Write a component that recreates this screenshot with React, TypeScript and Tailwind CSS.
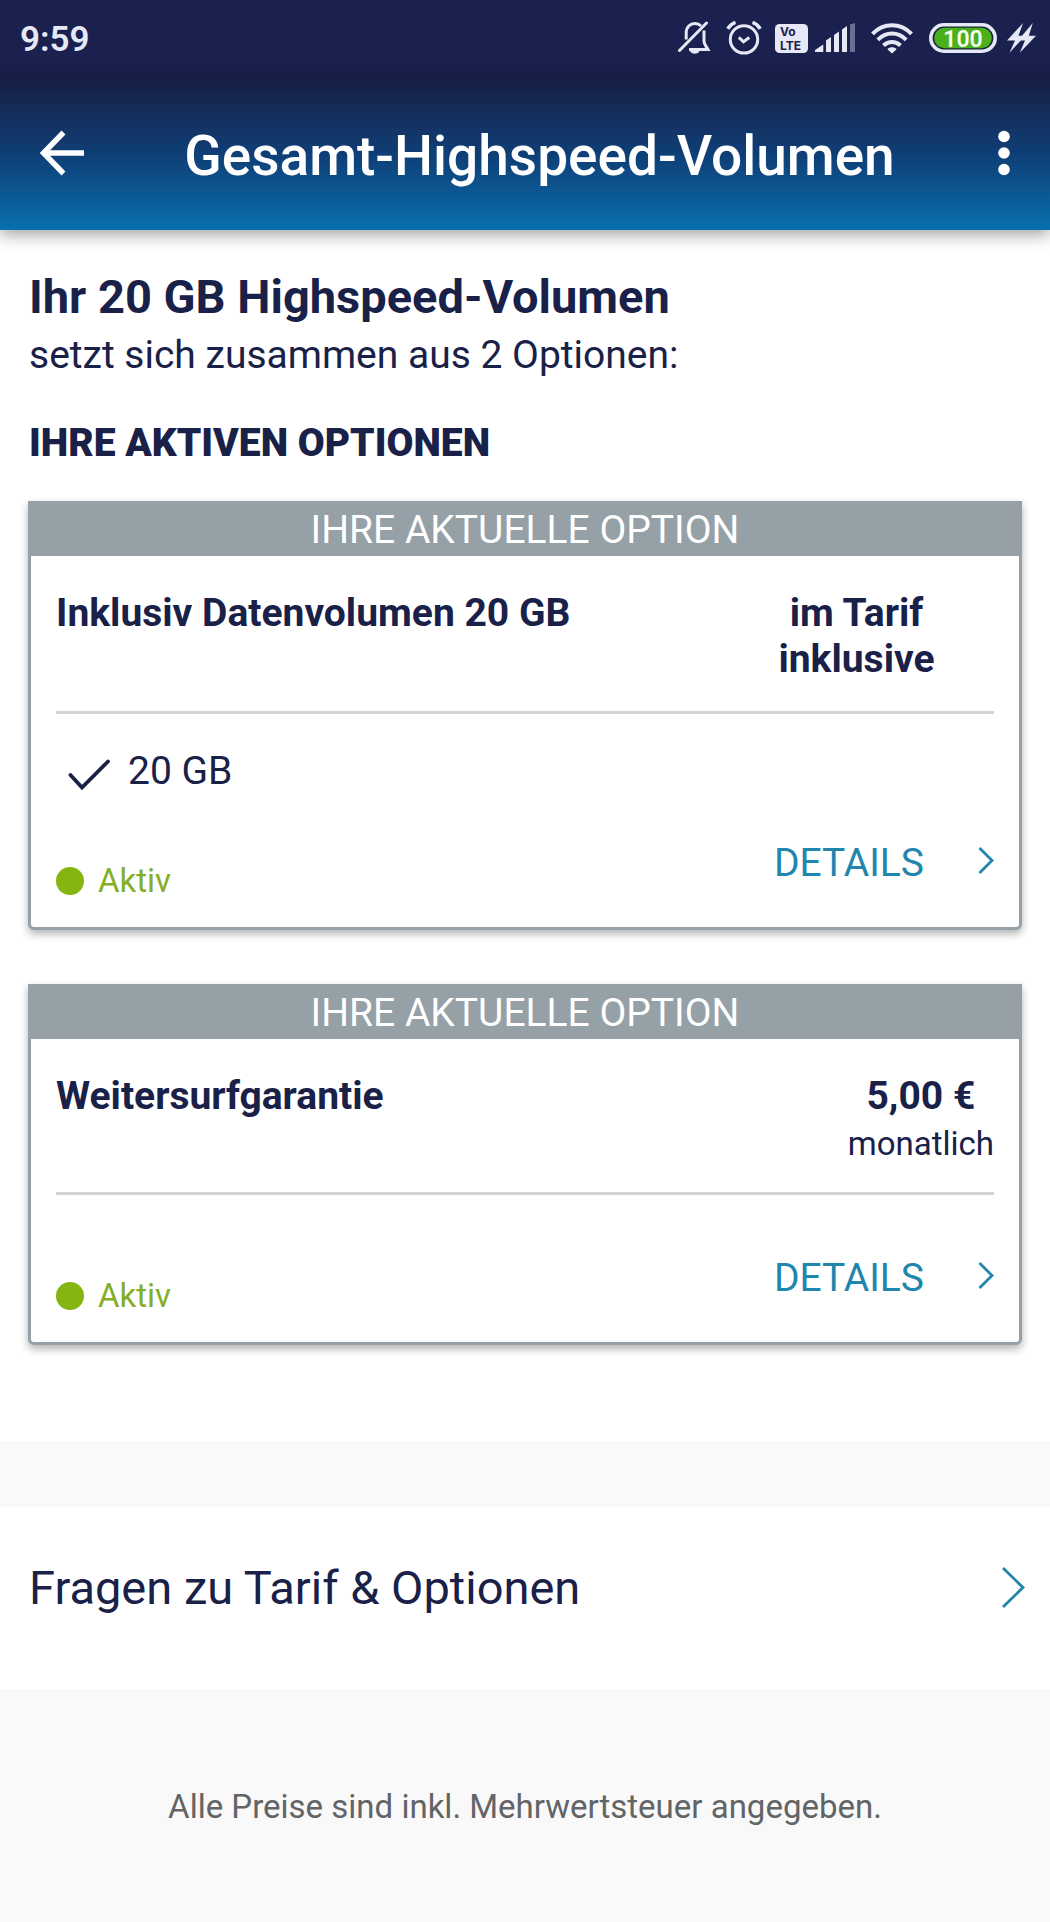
import React from "react";

type Option = {
  name: string;
  price: string;
  interval?: string;
  features: string[];
};

const options: Option[] = [
  { name: "Inklusiv Datenvolumen 20 GB", price: "im Tarif inklusive", features: ["20 GB"] },
  { name: "Weitersurfgarantie", price: "5,00 €", interval: "monatlich", features: [] },
];

function StatusBar() {
  return (
    <div className="flex h-[76px] items-center bg-[#1a214e] pl-5 pr-[14px] text-[#e6e8f6]">
      <span className="flex-1 pt-1 text-[35px] font-semibold">9:59</span>

      {/* muted bell */}
      <svg className="mr-[15px] h-9 w-[33px]" viewBox="0 0 33 36" fill="none" stroke="currentColor" strokeWidth="3">
        <path d="M8.2 19.5V13C8.2 7 12 3.6 17 3.6c2.6 0 4.4.8 6 2.4M26 10.5V21c0 3.500 2 5 4 8.600H11" />
        <path d="M1.5 30.5 28.5 3" strokeLinecap="round" />
        <path d="M12 31h9.500c-1.200 3.600-8.300 3.600-9.500 0z" fill="currentColor" stroke="none" />
      </svg>

      {/* alarm */}
      <svg className="mr-[13px] h-9 w-9" viewBox="0 0 36 36" fill="none" stroke="currentColor" strokeWidth="3">
        <circle cx="18" cy="19.4" r="13.7" />
        <path d="M12.8 17.3l4.700 4.500 5.800-4.300" />
        <path d="M1.800 8.800C3.500 5.800 6 3.600 9.500 2.400M34.200 8.800c-1.700-3-4.200-5.200-7.700-6.400" strokeWidth="3.4" />
      </svg>

      {/* VoLTE */}
      <svg className="mr-[7px] h-9 w-[33px]" viewBox="0 0 33 36">
        <rect x="0" y="4" width="33" height="29" rx="4.5" fill="currentColor" />
        <text x="5" y="16" fontFamily="Inter, sans-serif" fontSize="12" fontWeight="700" fill="#1a214e">Vo</text>
        <text x="5" y="30" fontFamily="Inter, sans-serif" fontSize="12" fontWeight="700" fill="#1a214e">LTE</text>
      </svg>

      {/* signal */}
      <svg className="mr-4 h-9 w-10" viewBox="0 0 40 36" fill="currentColor">
        <path d="M0 32v-2l8.300-5.500V32zM11 32V20.500l5-3.500v15zM19 32V15l5-3.500V32zM27 32V9.500L32 6v26z" />
        <path d="M35 32V4.500L40 3v29z" opacity=".4" />
      </svg>

      {/* wifi */}
      <svg className="mr-4 h-9 w-[42px]" viewBox="0 0 42 36" fill="none" stroke="currentColor" strokeWidth="4">
        <path d="M1.500 13.800C12.500 2.300 29.500 2.300 40.500 13.800" />
        <path d="M6.800 19.800C15 11.500 27 11.500 35.200 19.800" />
        <path d="M12.500 25.500c5-4.800 12-4.800 17 0" />
        <path d="M16.300 29.300c2.800-2.600 6.600-2.600 9.400 0L21 33.500z" fill="currentColor" stroke="none" />
      </svg>

      {/* battery */}
      <svg className="mr-[10px] h-9 w-[68px]" viewBox="0 0 68 36">
        <rect x="1.8" y="4.8" width="64.4" height="26.4" rx="13.2" fill="#15263a" stroke="currentColor" strokeWidth="3.6" />
        <rect x="5.2" y="7.8" width="57.6" height="20.4" rx="10.2" fill="#4caf1d" />
        <text x="34" y="26.5" textAnchor="middle" fontFamily="Roboto, sans-serif" fontSize="23" fontWeight="600" fill="#f4fff0">100</text>
      </svg>

      {/* charging */}
      <svg className="h-9 w-[29px]" viewBox="0 0 29 36" fill="currentColor">
        <path d="M16 3 0 20.500h8L2.500 32.800 18 15.800h-6.500z" />
        <path d="M25.800 3 11 20.500h7L12.800 32.800 29 15.800h-7.200z" />
      </svg>
    </div>
  );
}

function Header() {
  return (
    <header className="relative flex h-[154px] items-center bg-linear-to-b from-[#151e42] via-[#0e3e76] to-[#0670ad] pl-[38px] pr-[37px] text-white shadow-[0_4px_16px_rgba(0,0,0,0.4)]">
      <button aria-label="Zurück">
        <svg className="h-[46px] w-[46px]" viewBox="0 0 46 46" fill="none" stroke="currentColor" strokeWidth="5.4">
          <path d="M46 23H6M25.500 2.500 5.500 23l20 20.500" />
        </svg>
      </button>
      <h1 className="flex-1 pt-[6px] text-center text-[55px] font-medium">Gesamt-Highspeed-Volumen</h1>
      <button aria-label="Menü">
        <svg className="h-[46px] w-[18px]" viewBox="0 0 18 46" fill="currentColor">
          <circle cx="9" cy="6.5" r="5.8" />
          <circle cx="9" cy="23" r="5.8" />
          <circle cx="9" cy="39.5" r="5.8" />
        </svg>
      </button>
    </header>
  );
}

function OptionCard({ option }: { option: Option }) {
  const hasFeatures = option.features.length > 0;
  return (
    <article className="rounded-b-md border-[3px] border-[#95a0a7] bg-white shadow-[0_4px_8px_rgba(0,0,0,0.3)]">
      <div className="bg-[#95a0a7] text-center leading-[52px] text-white">IHRE AKTUELLE OPTION</div>
      <div className="px-[25px] pb-[23px] pt-[34px]">
        <div className="flex justify-between border-b-[3px] border-[#d0d4d5] pb-[29px] font-bold">
          <h3>{option.name}</h3>
          {option.interval ? (
            <div className="text-center">
              <p>{option.price}</p>
              <p className="pt-1.5 text-[33px] font-normal leading-[38px]">{option.interval}</p>
            </div>
          ) : (
            <p className="w-[275px] text-center">{option.price}</p>
          )}
        </div>
        <ul className={hasFeatures ? "pt-[34px]" : "pt-[14px]"}>
          {option.features.map((feature) => (
            <li key={feature} className="flex items-center gap-[18px] pl-3">
              <svg className="h-[42px] w-[42px]" viewBox="0 0 42 42" fill="none" stroke="currentColor" strokeWidth="3.8" strokeLinecap="round">
                <path d="M2.500 25 14 37.500 40 11.500" />
              </svg>
              {feature}
            </li>
          ))}
        </ul>
        <div className="mt-[46px] flex items-end justify-between">
          <div className="flex items-center gap-[14px] text-[33px] text-[#84ae27]">
            <span className="h-7 w-7 rounded-full bg-[#84b510]" />
            Aktiv
          </div>
          <button className="mb-[18px] flex items-center gap-[54px] text-[#2186ae]">
            DETAILS
            <svg className="h-8 w-4" viewBox="0 0 16 32" fill="none" stroke="currentColor" strokeWidth="2.8">
              <path d="M1.500 1 14 13.500 1.500 26" />
            </svg>
          </button>
        </div>
      </div>
    </article>
  );
}

export default function App() {
  return (
    <div className="min-h-screen bg-[#f9f9f9] font-['Roboto',sans-serif] text-[39px] leading-[46px] text-[#1a2148]">
      <StatusBar />
      <Header />
      <main>
        <section className="bg-white px-7 pb-24 pt-[37px]">
          <div className="pl-px">
            <p className="text-[47px] font-bold leading-[60px]">Ihr 20 GB Highspeed-Volumen</p>
            <p className="leading-[56px]">setzt sich zusammen aus 2 Optionen:</p>
            <h2 className="mb-[30px] mt-8 font-black leading-[56px]">IHRE AKTIVEN OPTIONEN</h2>
          </div>
          <div className="flex flex-col gap-[54px]">
            {options.map((option) => (
              <OptionCard key={option.name} option={option} />
            ))}
          </div>
        </section>
        <a
          href="#fragen"
          className="mt-[66px] flex items-center justify-between bg-white pb-[73px] pl-[29px] pr-[25px] pt-[53px] text-[47px] leading-[56px]"
        >
          Fragen zu Tarif &amp; Optionen
          <svg className="h-[42px] w-6 text-[#2186ae]" viewBox="0 0 24 42" fill="none" stroke="currentColor" strokeWidth="2.8">
            <path d="M2 1 22 20.500 2 40" />
          </svg>
        </a>
      </main>
      <footer className="pb-[91px] pt-[94px] text-center text-[33px] leading-[48px] text-[#626466]">
        Alle Preise sind inkl. Mehrwertsteuer angegeben.
      </footer>
    </div>
  );
}
